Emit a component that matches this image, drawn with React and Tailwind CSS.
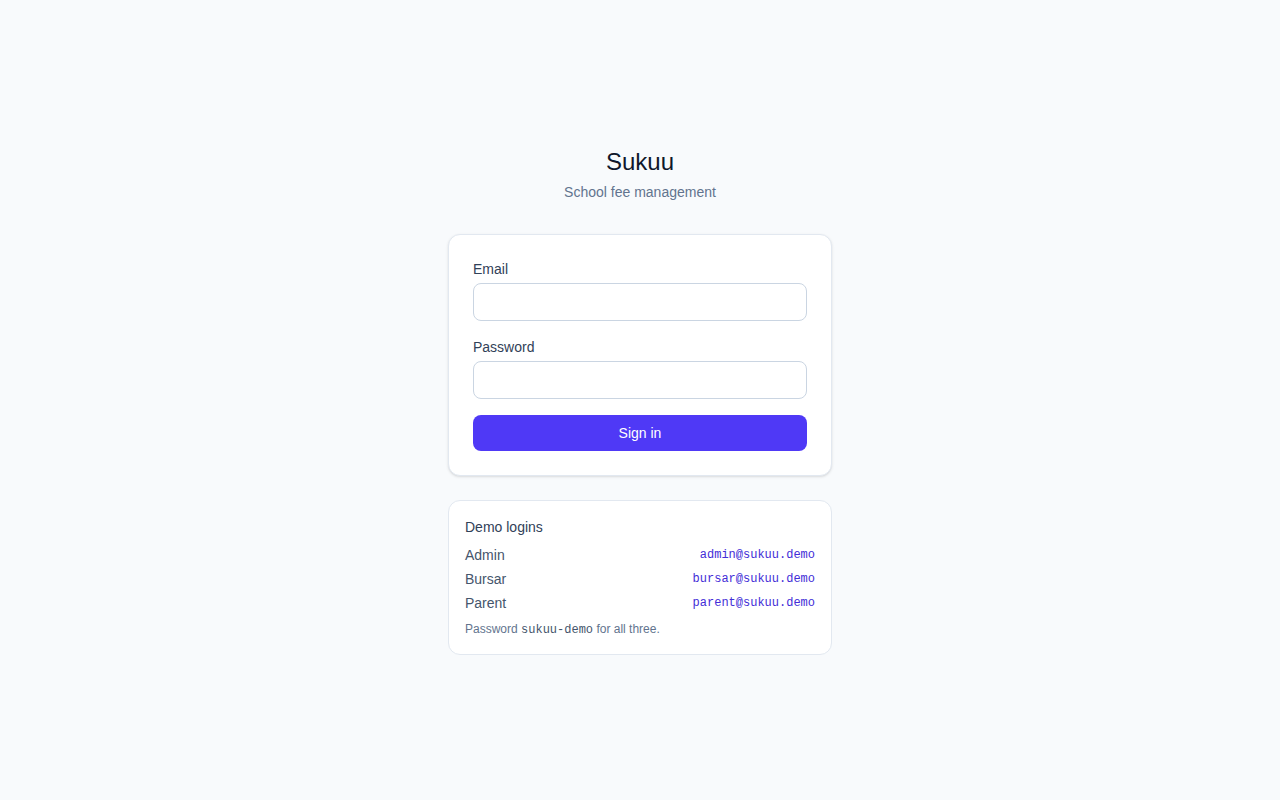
export default function App() {
  return (
    <div className="min-h-screen bg-slate-50 flex items-center justify-center px-4 font-['Liberation_Sans',Arial,sans-serif]">
      <div className="w-full max-w-sm">
        <div className="text-center mb-8">
          <h1 className="text-2xl text-slate-900">Sukuu</h1>
          <p className="mt-1 text-sm text-slate-500">School fee management</p>
        </div>

        <form className="bg-white border border-slate-200 rounded-xl shadow-sm p-6 space-y-4" onSubmit={(e) => e.preventDefault()}>
          <div>
            <label className="block text-sm text-slate-700 mb-1">Email</label>
            <input type="email" className="w-full rounded-lg border border-slate-300 px-3 py-2 text-sm outline-none" />
          </div>
          <div>
            <label className="block text-sm text-slate-700 mb-1">Password</label>
            <input type="password" className="w-full rounded-lg border border-slate-300 px-3 py-2 text-sm outline-none" />
          </div>
          <button type="submit" className="w-full rounded-lg bg-indigo-600 py-2 text-sm text-white">
            Sign in
          </button>
        </form>

        <div className="mt-6 bg-white border border-slate-200 rounded-xl p-4 text-sm">
          <div className="text-slate-700 mb-2">Demo logins</div>
          <div className="space-y-1">
            {[
              ['Admin', 'admin@sukuu.demo'],
              ['Bursar', 'bursar@sukuu.demo'],
              ['Parent', 'parent@sukuu.demo'],
            ].map(([role, email]) => (
              <div key={role} className="flex items-center justify-between">
                <span className="text-slate-600">{role}</span>
                <span className="font-['Liberation_Mono',monospace] text-xs text-indigo-700">{email}</span>
              </div>
            ))}
          </div>
          <p className="mt-2 text-xs text-slate-500">
            Password <span className="font-['Liberation_Mono',monospace] text-slate-600">sukuu-demo</span> for all three.
          </p>
        </div>
      </div>
    </div>
  );
}
